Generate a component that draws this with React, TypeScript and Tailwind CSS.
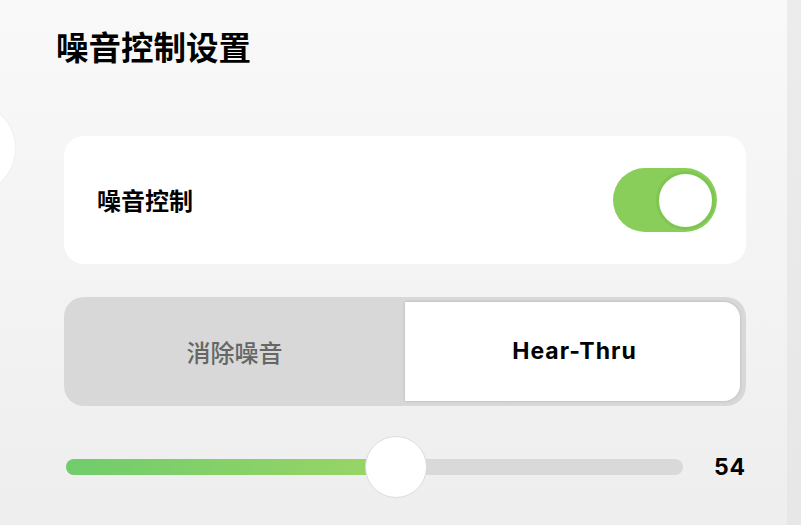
import { useState } from 'react';

const cjk = 'font-["Noto_Sans_CJK_SC","Noto_Sans",sans-serif]';
const latin = 'font-["Inter","Noto_Sans_CJK_SC",sans-serif]';

export default function App() {
  const [enabled, setEnabled] = useState(true);
  const [mode, setMode] = useState<'anc' | 'thru'>('thru');
  const [level] = useState(54);

  return (
    <div className="flex h-[525px] w-[801px] overflow-hidden">
      <div className="relative flex-1 bg-gradient-to-b from-[#f9f9f9] to-[#eeeeee] pl-[64px] pr-[41px]">
        {/* edge of a round element peeking in from the left */}
        <div className="absolute left-[-76px] top-[103px] h-[91px] w-[91px] rounded-full bg-white shadow-[0_0_2px_rgba(0,0,0,0.08)]" />

        <h1 className={`${cjk} -ml-[8px] pt-[26px] text-[32.5px] font-bold leading-[40px] text-black`}>
          噪音控制设置
        </h1>

        <div className="mt-[70px] flex h-[128px] items-center justify-between rounded-[20px] bg-white pl-[33px] pr-[29px]">
          <span className={`${cjk} text-[24px] font-bold text-black`}>噪音控制</span>
          <button
            onClick={() => setEnabled(!enabled)}
            className={`flex h-[64px] w-[104px] items-center rounded-full px-[2px] ${
              enabled ? 'justify-end bg-[#89cd5b]' : 'justify-start bg-[#d8d8d8]'
            }`}
          >
            <span
              className={`h-[59px] w-[59px] rounded-full border-[3px] bg-white ${
                enabled ? 'border-[#7fc552]' : 'border-[#cfcfcf]'
              }`}
            />
          </button>
        </div>

        <div className="mt-[33px] flex h-[109px] rounded-[20px] bg-[#d8d8d8] py-[5px] pr-[6px]">
          <button
            onClick={() => setMode('anc')}
            className={`${cjk} flex w-[341px] items-center justify-center text-[24px] font-medium text-[#666666]`}
          >
            消除噪音
          </button>
          <button
            onClick={() => setMode('thru')}
            className={`${latin} flex flex-1 items-center justify-center rounded-r-[16px] bg-white pl-[4px] text-[23px] font-bold tracking-[0.045em] text-black shadow-[0_0_3px_rgba(0,0,0,0.18)] ${
              mode === 'thru' ? '' : 'opacity-0'
            }`}
          >
            Hear-Thru
          </button>
        </div>

        <div className="mt-[30px] flex h-[62px] items-center">
          <div className="relative ml-[2px] h-[16px] w-[617px] rounded-full bg-[#d9d9d9]">
            <div
              className="h-full rounded-full bg-gradient-to-r from-[#70cc6c] to-[#9ad565]"
              style={{ width: `${(level / 100) * 617 - 4}px` }}
            />
            <div
              className="absolute top-[-23px] h-[62px] w-[62px] rounded-full border border-[#dcdcdc] bg-white"
              style={{ left: `${(level / 100) * 617 - 34}px` }}
            />
          </div>
          <span className={`${latin} ml-auto text-[23px] font-bold tracking-[0.04em] text-black`}>{level}</span>
        </div>
      </div>
      <div className="w-[14px] bg-gradient-to-b from-[#ececec] to-[#e7e7e7]" />
    </div>
  );
}
